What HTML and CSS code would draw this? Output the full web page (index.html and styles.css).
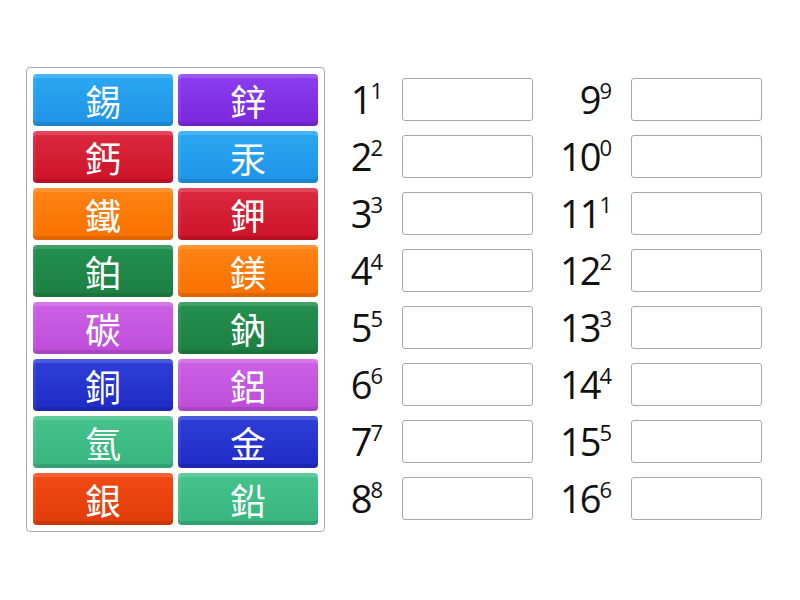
FILE: index.html
```html
<!DOCTYPE html>
<html lang="zh-Hant">
<head>
<meta charset="utf-8">
<title>Match up</title>
<link rel="stylesheet" href="styles.css">
</head>
<body>
<div class="page">
  <div class="bank">
    <div class="tile c-blue">錫</div>
    <div class="tile c-purple">鋅</div>
    <div class="tile c-red">鈣</div>
    <div class="tile c-blue">汞</div>
    <div class="tile c-orange">鐵</div>
    <div class="tile c-red">鉀</div>
    <div class="tile c-green">鉑</div>
    <div class="tile c-orange">鎂</div>
    <div class="tile c-violet">碳</div>
    <div class="tile c-green">鈉</div>
    <div class="tile c-navy">銅</div>
    <div class="tile c-violet">鋁</div>
    <div class="tile c-mint">氫</div>
    <div class="tile c-navy">金</div>
    <div class="tile c-flame">銀</div>
    <div class="tile c-mint">鉛</div>
  </div>
  <div class="answers">
    <div class="label">1<sup>1</sup></div><div class="box"></div>
    <div class="label">9<sup>9</sup></div><div class="box"></div>
    <div class="label">2<sup>2</sup></div><div class="box"></div>
    <div class="label">10<sup>0</sup></div><div class="box"></div>
    <div class="label">3<sup>3</sup></div><div class="box"></div>
    <div class="label">11<sup>1</sup></div><div class="box"></div>
    <div class="label">4<sup>4</sup></div><div class="box"></div>
    <div class="label">12<sup>2</sup></div><div class="box"></div>
    <div class="label">5<sup>5</sup></div><div class="box"></div>
    <div class="label">13<sup>3</sup></div><div class="box"></div>
    <div class="label">6<sup>6</sup></div><div class="box"></div>
    <div class="label">14<sup>4</sup></div><div class="box"></div>
    <div class="label">7<sup>7</sup></div><div class="box"></div>
    <div class="label">15<sup>5</sup></div><div class="box"></div>
    <div class="label">8<sup>8</sup></div><div class="box"></div>
    <div class="label">16<sup>6</sup></div><div class="box"></div>
  </div>
</div>
</body>
</html>
```
FILE: styles.css
```css
html, body {
  margin: 0;
  padding: 0;
  background: #ffffff;
}

.page {
  display: flex;
  align-items: flex-start;
  padding: 67px 0 0 26px;
}

.bank {
  display: grid;
  grid-template-columns: 140px 140px;
  grid-auto-rows: 52px;
  gap: 5px;
  padding: 6px;
  border: 1px solid #a8a8a8;
  border-radius: 4px;
}

.tile {
  display: flex;
  align-items: center;
  justify-content: center;
  border-radius: 4px;
  color: #ffffff;
  font-family: "Noto Sans CJK TC", "Noto Sans CJK SC", sans-serif;
  font-size: 36px;
  line-height: 1;
  box-shadow:
    inset 0 4px 0 rgba(255, 255, 255, 0.14),
    inset 0 -4px 0 rgba(0, 0, 0, 0.10),
    inset 3px 0 0 rgba(255, 255, 255, 0.06);
}

.c-blue   { background: linear-gradient(#2aa8f2, #1f93e6); }
.c-purple { background: linear-gradient(#8b3ef0, #7b26dc); }
.c-red    { background: linear-gradient(#dc2a40, #cc1228); }
.c-orange { background: linear-gradient(#ff8414, #f87000); }
.c-green  { background: linear-gradient(#23904e, #1c7f42); }
.c-violet { background: linear-gradient(#cc62e6, #bd4cd8); }
.c-navy   { background: linear-gradient(#2e3fd8, #1e2bc4); }
.c-mint   { background: linear-gradient(#46c48d, #38b47e); }
.c-flame  { background: linear-gradient(#f24a14, #e03c08); }

.answers {
  display: grid;
  grid-template-columns: 58px 131px 60px 131px;
  grid-auto-rows: 43px;
  column-gap: 19px;
  row-gap: 14px;
  margin-top: 11px;
}

.label {
  text-align: right;
  font-family: "Open Sans", "Noto Sans", sans-serif;
  font-size: 38px;
  line-height: 43px;
  color: #111111;
  letter-spacing: -2px;
  white-space: nowrap;
}

.label sup {
  font-size: 22px;
  line-height: 1;
  vertical-align: 0.66em;
  letter-spacing: 0;
}

.box {
  border: 1px solid #a8a8a8;
  border-radius: 3px;
  background: #ffffff;
}
```
